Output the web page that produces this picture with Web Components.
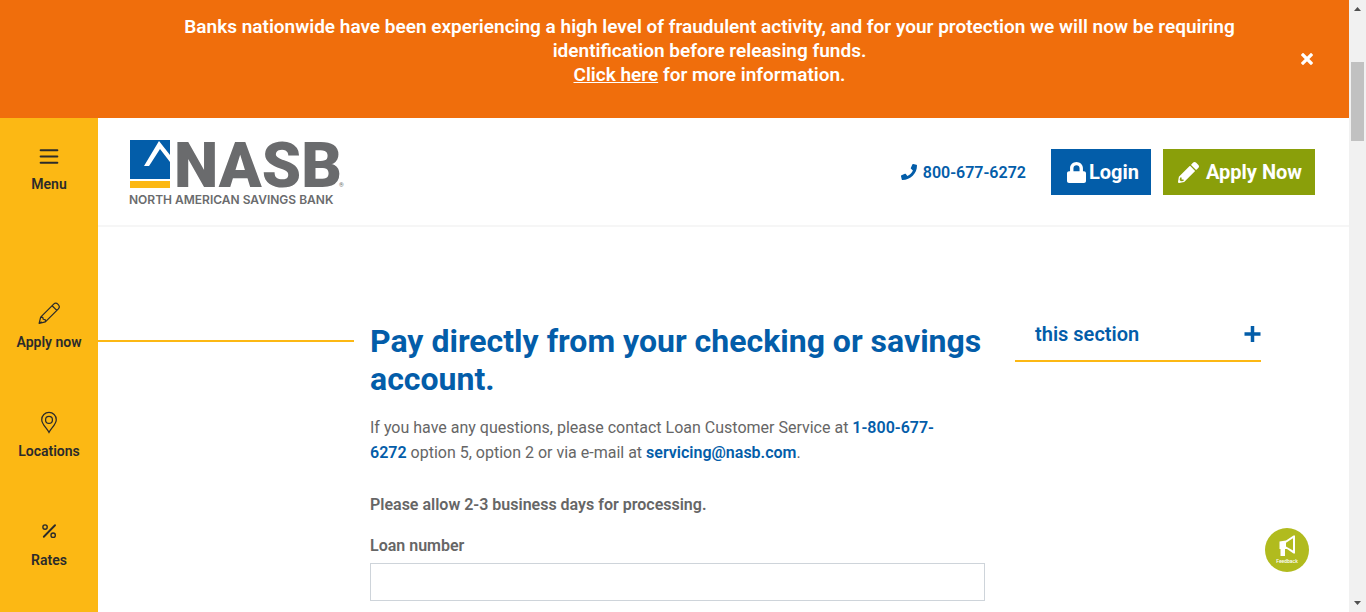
<!DOCTYPE html>
<html lang="en">
<head>
<meta charset="utf-8">
<meta name="viewport" content="width=device-width, initial-scale=1">
<title>Make a payment | NASB</title>
<style>
  :root { --blue: #035da9; --gold: #fcb814; --orange: #f06e0c; --green: #8a9f0a; --gray: #666; --ink: #2b2b2b; }
  body { margin: 0; background: #fff; color: var(--gray); font: 400 16px/25px Roboto, "Liberation Sans", sans-serif; }
</style>
</head>
<body>
<nasb-page>
  <alert-banner slot="banner">Banks nationwide have been experiencing a high level of fraudulent activity, and for your protection we will now be requiring identification before releasing funds.<br><a href="#more" style="color:inherit">Click here</a> for more information.</alert-banner>
  <side-nav slot="nav">
    <nav-item slot="menu" icon="menu">Menu</nav-item>
    <nav-item icon="pencil">Apply now</nav-item>
    <nav-item icon="pin">Locations</nav-item>
    <nav-item icon="percent">Rates</nav-item>
  </side-nav>
  <site-header></site-header>
  <payment-section></payment-section>
  <feedback-button slot="float"></feedback-button>
</nasb-page>

<script>
function define(name, html, setup) {
  const template = document.createElement('template');
  template.innerHTML = html;
  customElements.define(name, class extends HTMLElement {
    constructor() {
      super();
      this.attachShadow({ mode: 'open' }).append(template.content.cloneNode(true));
      if (setup) setup(this);
    }
  });
}

define('nasb-page', `
  <style>
    :host { display: grid; grid-template-columns: minmax(0, 1fr) 17px; height: 100vh; overflow: hidden; }
    .page { display: grid; grid-template-rows: auto minmax(0, 1fr); min-height: 0; overflow: hidden; }
    .body { display: grid; grid-template-columns: 98px minmax(0, 1fr); min-height: 0; }
    main { min-width: 0; overflow: hidden; }
  </style>
  <div class="page">
    <slot name="banner"></slot>
    <div class="body"><slot name="nav"></slot><main><slot></slot></main></div>
  </div>
  <scroll-track></scroll-track>
  <slot name="float"></slot>`);

define('scroll-track', `
  <style>
    :host { display: flex; flex-direction: column; align-items: center; background: #f1f1f1; }
    svg { display: block; flex: none; }
    .before { flex: 45 1 0; }
    .thumb { flex: 79 1 0; width: 13px; background: #c1c1c1; }
    .after { flex: 454 1 0; }
  </style>
  <svg width="17" height="17"><path d="M5 11L8.5 7L12 11Z" fill="#505050"/></svg>
  <div class="before"></div><div class="thumb"></div><div class="after"></div>
  <svg width="17" height="17"><path d="M5 6L8.500 10L12 6Z" fill="#505050"/></svg>`);

define('alert-banner', `
  <style>
    :host { display: block; position: relative; box-sizing: border-box; padding: 15px 90px 31px 160px; background: var(--orange); color: #fff; text-align: center; font-size: 19px; font-weight: 600; line-height: 24px; }
    p { margin: 0; }
    button { position: absolute; right: 32px; top: 50%; transform: translateY(-50%); width: 20px; height: 20px; padding: 0; border: 0; background: none; color: inherit; cursor: pointer; }
    svg { display: block; margin: auto; }
  </style>
  <p><slot></slot></p>
  <button type="button" aria-label="Close"><svg width="12" height="12" viewBox="0 0 12 12"><path d="M2 2L10 10M10 2L2 10" stroke="currentColor" stroke-width="3.2" stroke-linecap="square" stroke-linejoin="round"/></svg></button>`);

define('side-nav', `
  <style>
    :host { display: flex; flex-direction: column; gap: 104px; padding-top: 24px; background: var(--gold); overflow: hidden; }
    nav { display: flex; flex-direction: column; gap: 55px; }
  </style>
  <div><slot name="menu"></slot></div>
  <nav aria-label="Quick links"><slot></slot></nav>`);

const icons = {
  menu: '<path d="M4.500 8H20.500M4.500 14H20.500M4.500 20H20.500" stroke-width="2" stroke-linecap="round"/>',
  pencil: '<path d="M3 22.500L4.500 16.500L17 4Q19 2 21.200 4.200Q23.500 6.500 21.500 8.500L9 21ZM15.500 5.500L20 10M4.500 16.500L6.500 16.700L7 18.500L9 19L9 21M3 22.500L5.500 21" stroke-width="1.2" stroke-linejoin="round"/>',
  pin: '<path d="M12.500 22.500C10 18 5.500 14.500 5.500 10.300A7 7 0 0 1 19.500 10.300C19.500 14.500 15 18 12.500 22.500Z" stroke-width="1.200"/><circle cx="12.500" cy="10.500" r="3.300" stroke-width="1.200"/>',
  percent: '<path d="M7.500 18L18.300 7" stroke-width="1.800" stroke-linecap="round"/><circle cx="8.700" cy="8.700" r="2.100" stroke-width="1.300"/><circle cx="16.500" cy="16.500" r="2.100" stroke-width="1.300"/>'
};
define('nav-item', `
  <style>
    :host { display: block; }
    a { display: flex; flex-direction: column; align-items: center; gap: 4px; color: var(--ink); font-size: 14px; line-height: 24px; font-weight: 600; text-decoration: none; }
    svg { display: block; fill: none; stroke: currentColor; }
  </style>
  <a href="#"><svg width="26" height="26" viewBox="0 0 25 25" aria-hidden="true"></svg><span><slot></slot></span></a>`,
  el => { el.shadowRoot.querySelector('svg').innerHTML = icons[el.getAttribute('icon')]; });

define('nasb-logo', `
  <style>
    :host { display: block; }
    a, svg { display: block; }
    svg { overflow: visible; }
  </style>
  <a href="#home" aria-label="NASB home">
    <svg width="216" height="68" viewBox="0 0 216 68">
      <path fill="#035da9" d="M0 2H40V41H0Z"/>
      <path fill="#fcb814" d="M0 43H40V50H0Z"/>
      <path fill="#fff" d="M14 28L29 3L40 17V24L30 11L21 25L19 28Z"/>
      <text x="44" y="49" font-family="Roboto" font-size="63" font-weight="900" fill="#6a6b6d">NASB</text>
      <text x="-1" y="66" font-family="Inter" font-size="12" font-weight="600" fill="#6a6b6d">NORTH AMERICAN SAVINGS BANK</text>
      <text x="209" y="49" font-family="Roboto" font-size="6" fill="#6a6b6d">®</text>
    </svg>
  </a>`);

define('site-header', `
  <style>
    :host { display: flex; align-items: center; justify-content: space-between; box-sizing: border-box; padding: 20px 34px 19px 32px; border-bottom: 2px solid #f6f6f6; }
    .actions { display: flex; align-items: center; gap: 12px; }
    .phone { display: flex; align-items: center; gap: 6px; margin-right: 13px; color: var(--blue); font-weight: 600; text-decoration: none; }
    button { display: flex; align-items: center; height: 46px; border: 0; padding: 0 12px 0 16px; background: var(--blue); color: #fff; font: 700 20px/24px Roboto, sans-serif; gap: 3px; cursor: pointer; }
    .apply { padding: 0 13px 0 15px; background: var(--green); gap: 7px; }
    svg { display: block; fill: currentColor; }
  </style>
  <nasb-logo></nasb-logo>
  <div class="actions">
    <a class="phone" href="tel:8006776272"><svg width="16" height="16" viewBox="0 0 512 512" aria-hidden="true"><path d="M493.400 24.600l-104-24c-11.300-2.600-22.900 3.300-27.500 13.900l-48 112c-4.200 9.800-1.400 21.300 6.900 28l60.600 49.600c-36 76.700-98.900 140.500-177.200 177.200l-49.600-60.600c-6.800-8.300-18.200-11.100-28-6.900l-112 48C3.900 366.500-2 378.100.6 389.400l24 104C27.100 504.200 36.700 512 48 512c256.100 0 464-207.500 464-464 0-11.200-7.700-20.900-18.600-23.400z"/></svg>800-677-6272</a>
    <button type="button"><svg width="19" height="21" viewBox="0 0 448 512" preserveAspectRatio="none" aria-hidden="true"><path d="M400 224h-24v-72C376 68.200 307.800 0 224 0S72 68.200 72 152v72H48c-26.500 0-48 21.500-48 48v192c0 26.500 21.500 48 48 48h352c26.500 0 48-21.500 48-48V272c0-26.500-21.500-48-48-48zm-104 0H152v-72c0-39.700 32.300-72 72-72s72 32.300 72 72v72z"/></svg>Login</button>
    <button type="button" class="apply"><svg width="21" height="21" viewBox="0 0 512 512" aria-hidden="true"><path d="M497.900 142.100l-46.100 46.100c-4.700 4.700-12.300 4.700-17 0l-111-111c-4.700-4.700-4.700-12.300 0-17l46.100-46.100c18.700-18.700 49.100-18.700 67.900 0l60.100 60.100c18.800 18.700 18.800 49.100 0 67.900zM284.200 99.800L21.600 362.400.4 483.900c-2.900 16.400 11.400 30.600 27.800 27.800l121.500-21.300 262.600-262.600c4.700-4.700 4.700-12.300 0-17l-111-111c-4.800-4.700-12.400-4.700-17.100 0zM88 424h48v36.300l-64.500 11.300-31.100-31.100L51.700 376H88v48z"/></svg>Apply Now</button>
  </div>`);

define('section-toggle', `
  <style>
    :host { display: block; }
    button { display: flex; align-items: center; justify-content: space-between; width: 100%; border: 0; border-bottom: 2px solid var(--gold); padding: 0 0 14px 20px; background: none; color: var(--blue); font: 600 20px/24px Roboto, sans-serif; cursor: pointer; }
    svg { display: block; }
  </style>
  <button type="button" aria-expanded="false"><slot></slot><svg width="17" height="18" viewBox="0 0 17 18" aria-hidden="true"><path d="M8.500 1V17M0.500 9H16.500" stroke="currentColor" stroke-width="3.500"/></svg></button>`);

define('payment-section', `
  <style>
    :host { display: grid; grid-template-columns: 256fr 631fr 276fr; padding: 95px 88px 80px 0; }
    .rule { height: 2px; margin-top: 18px; background: var(--gold); }
    article { padding-left: 16px; }
    h1 { margin: 0 0 17px; color: var(--blue); font-size: 32px; line-height: 38px; font-weight: 700; }
    p { margin: 0 0 16px; }
    .contact { margin-bottom: 27px; padding-right: 40px; }
    p a { color: var(--blue); font-weight: 600; text-decoration: none; }
    strong, label { font-weight: 600; }
    label { display: block; margin-bottom: 5px; }
    input { display: block; box-sizing: border-box; width: 100%; height: 38px; padding: 6px 12px; border: 1px solid #ced4da; border-radius: 0; background: #fff; font: inherit; }
    aside { padding-left: 30px; }
  </style>
  <div class="rule"></div>
  <article>
    <h1>Pay directly from your checking or savings account.</h1>
    <p class="contact">If you have any questions, please contact Loan Customer Service at <a href="tel:18006776272">1-800-677-6272</a> option 5, option 2 or via e-mail at <a href="mailto:servicing@nasb.com">servicing@nasb.com</a>.</p>
    <p><strong>Please allow 2-3 business days for processing.</strong></p>
    <form><label for="loan">Loan number</label><input id="loan" type="text"></form>
  </article>
  <aside><section-toggle>this section</section-toggle></aside>`);

define('feedback-button', `
  <style>
    :host { display: block; position: fixed; right: 57px; bottom: 40px; }
    button { display: flex; flex-direction: column; align-items: center; gap: 1px; width: 44px; height: 44px; padding: 6px 0 0; border: 0; border-radius: 50%; background: #b1bb1e; color: #fff; font: 500 5px/6px Roboto, sans-serif; cursor: pointer; }
    svg { display: block; flex: none; }
  </style>
  <button type="button"><svg width="18" height="23" viewBox="0 0 18 23" aria-hidden="true"><path d="M1.500 7.500L8 6.500L15.500 1.500H17V19.500H15.500L9 15H1.500Z" fill="#fff"/><path d="M8 8.800L15 4.200V16.500L8 12.500Z" fill="#b1bb1e"/><path d="M2.500 14H7V22H2.500Z" fill="#fff"/></svg><span>Feedback</span></button>`);
</script>
</body>
</html>
